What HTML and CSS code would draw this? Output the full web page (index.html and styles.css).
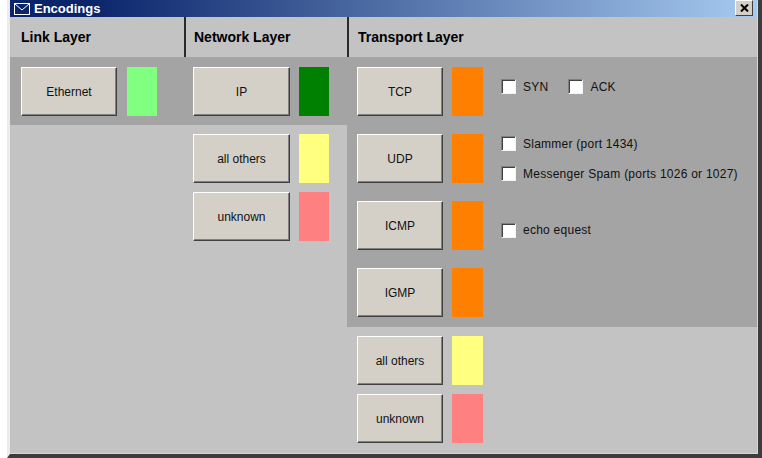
FILE: index.html
```html
<!DOCTYPE html>
<html lang="en">
<head>
    <meta charset="UTF-8">
    <meta name="viewport" content="width=device-width, initial-scale=1.0">
    <title>Encodings</title>
    <link rel="stylesheet" href="styles.css">
</head>
<body>
    <div class="window">
        <div class="titlebar">
            <svg class="title-icon" width="16" height="12" viewBox="0 0 16 12">
                <rect x="0.5" y="0.5" width="15" height="11" fill="none" stroke="#fff"/>
                <polyline points="1,1 8,7 15,1" fill="none" stroke="#fff"/>
            </svg>
            <span class="title">Encodings</span>
            <span class="close">
                <svg width="9" height="8" viewBox="0 0 9 8">
                    <path d="M1 0.5 L8 7.5 M8 0.5 L1 7.5" stroke="#000" stroke-width="2"/>
                </svg>
            </span>
        </div>

        <!-- column headings -->
        <div class="layers">
            <div class="layer-head">Link Layer</div>
            <div class="layer-head">Network Layer</div>
            <div class="layer-head">Transport Layer</div>
        </div>

        <div class="tree">
            <!-- link layer -->
            <div class="col col-link">
                <div class="entry top sel">
                    <button class="btn">Ethernet</button>
                    <span class="swatch light-green"></span>
                </div>
            </div>

            <!-- network layer -->
            <div class="col col-net">
                <div class="entry top sel">
                    <button class="btn">IP</button>
                    <span class="swatch green"></span>
                </div>
                <div class="list">
                    <div class="entry">
                        <button class="btn">all others</button>
                        <span class="swatch yellow"></span>
                    </div>
                    <div class="entry">
                        <button class="btn">unknown</button>
                        <span class="swatch pink"></span>
                    </div>
                </div>
            </div>

            <!-- transport layer -->
            <div class="col col-trans">
                <div class="group sel">
                    <div class="entry">
                        <button class="btn">TCP</button>
                        <span class="swatch orange"></span>
                        <div class="opts inline raise">
                            <label class="opt"><span class="check"></span>SYN</label>
                            <label class="opt"><span class="check"></span>ACK</label>
                        </div>
                    </div>
                    <div class="entry">
                        <button class="btn">UDP</button>
                        <span class="swatch orange"></span>
                        <div class="opts">
                            <label class="opt"><span class="check"></span>Slammer (port 1434)</label>
                            <label class="opt"><span class="check"></span>Messenger Spam (ports 1026 or 1027)</label>
                        </div>
                    </div>
                    <div class="entry">
                        <button class="btn">ICMP</button>
                        <span class="swatch orange"></span>
                        <div class="opts lower">
                            <label class="opt"><span class="check"></span>echo equest</label>
                        </div>
                    </div>
                    <div class="entry">
                        <button class="btn">IGMP</button>
                        <span class="swatch orange"></span>
                    </div>
                </div>
                <div class="list">
                    <div class="entry">
                        <button class="btn">all others</button>
                        <span class="swatch yellow"></span>
                    </div>
                    <div class="entry">
                        <button class="btn">unknown</button>
                        <span class="swatch pink"></span>
                    </div>
                </div>
            </div>
        </div>
    </div>
</body>
</html>
```
FILE: styles.css
```css
body {
    margin: 0;
    background-color: #fff;
    font-family: "Liberation Sans", Arial, sans-serif;
    color: #000;
}
.window {
    box-sizing: border-box;
    margin-left: 7px;
    width: 755px;
    height: 458px;
    display: flex;
    flex-direction: column;
    background-color: #c3c3c3;
    border-left: 3px solid #ececec;
    border-right: 4px solid #3c3c3c;
    border-bottom: 4px solid #3c3c3c;
    padding: 0 1px 1px 0;
    box-shadow: inset -1px -1px 0 #d6d6d6;
}
.titlebar {
    height: 17px;
    display: flex;
    align-items: center;
    padding: 0 4px 0 4px;
    background: linear-gradient(to right, #0a246a 10%, #a6caf0);
}
.title-icon {
    flex: none;
}
.title {
    margin-left: 4px;
    color: #fff;
    font-weight: bold;
    font-size: 13px;
}
.close {
    margin-left: auto;
    margin-top: -2px;
    box-sizing: border-box;
    width: 18px;
    height: 16px;
    display: flex;
    align-items: center;
    justify-content: center;
    background-color: #d4d0c8;
    border: 1px solid;
    border-color: #fff #404040 #404040 #fff;
}
.layers {
    height: 40px;
    display: grid;
    grid-template-columns: 174px 163px 1fr;
}
.layer-head {
    display: flex;
    align-items: center;
    padding-left: 11px;
    font-weight: bold;
    font-size: 14px;
}
.layer-head + .layer-head {
    border-left: 2px solid #2a2a2a;
    padding-left: 8px;
}
.layer-head:last-child {
    padding-left: 9px;
}
.tree {
    flex: 1;
    display: grid;
    grid-template-columns: 174px 163px 1fr;
    align-items: start;
}
.sel {
    background-color: #a4a4a4;
}
.entry {
    display: flex;
    align-items: center;
}
.entry.top {
    height: 68px;
    box-sizing: border-box;
    align-items: flex-start;
    padding-top: 10px;
}
.btn {
    box-sizing: border-box;
    height: 49px;
    padding: 0;
    display: flex;
    align-items: center;
    justify-content: center;
    font-family: "Liberation Sans", Arial, sans-serif;
    font-size: 12px;
    color: #111;
    background-color: #d4d0c8;
    border: 1px solid;
    border-color: #fff #404040 #404040 #fff;
    box-shadow: inset -1px -1px 0 #808080;
}
.swatch {
    height: 49px;
    width: 30px;
}
.light-green { background-color: #80ff80; }
.green { background-color: #008000; }
.orange { background-color: #ff8000; }
.yellow { background-color: #ffff80; }
.pink { background-color: #ff8080; }

/* per column spacing */
.col-link .entry {
    padding-left: 11px;
    gap: 10px;
}
.col-link .btn {
    width: 96px;
}
.col-net .entry.top {
    padding-left: 9px;
}
.col-net .entry {
    gap: 9px;
}
.col-net .btn {
    width: 97px;
}
.col-net .list {
    padding: 9px 0 0 9px;
}
.col-trans .btn {
    width: 86px;
}
.col-trans .swatch {
    width: 31px;
}
.col-trans .entry {
    gap: 9px;
}
.list {
    display: flex;
    flex-direction: column;
    gap: 9px;
}
.col-trans .list {
    padding: 9px 0 0 10px;
}
.group {
    display: flex;
    flex-direction: column;
    gap: 18px;
    padding: 10px 0 10px 10px;
}

/* checkbox options beside a protocol */
.opts {
    margin-left: 9px;
    display: flex;
    flex-direction: column;
    gap: 15px;
}
.opts.inline {
    flex-direction: row;
    gap: 20px;
}
.opts.raise {
    margin-bottom: 10px;
}
.opts.lower {
    margin-top: 9px;
}
.opt {
    height: 15px;
    display: flex;
    align-items: center;
    gap: 7px;
    font-size: 12px;
    letter-spacing: 0.25px;
    color: #111;
    white-space: nowrap;
}
.check {
    box-sizing: border-box;
    width: 15px;
    height: 15px;
    background-color: #fff;
    border: 1px solid;
    border-color: #808080 #f4f4f4 #f4f4f4 #808080;
    box-shadow: inset 1px 1px 0 #404040;
}
```
